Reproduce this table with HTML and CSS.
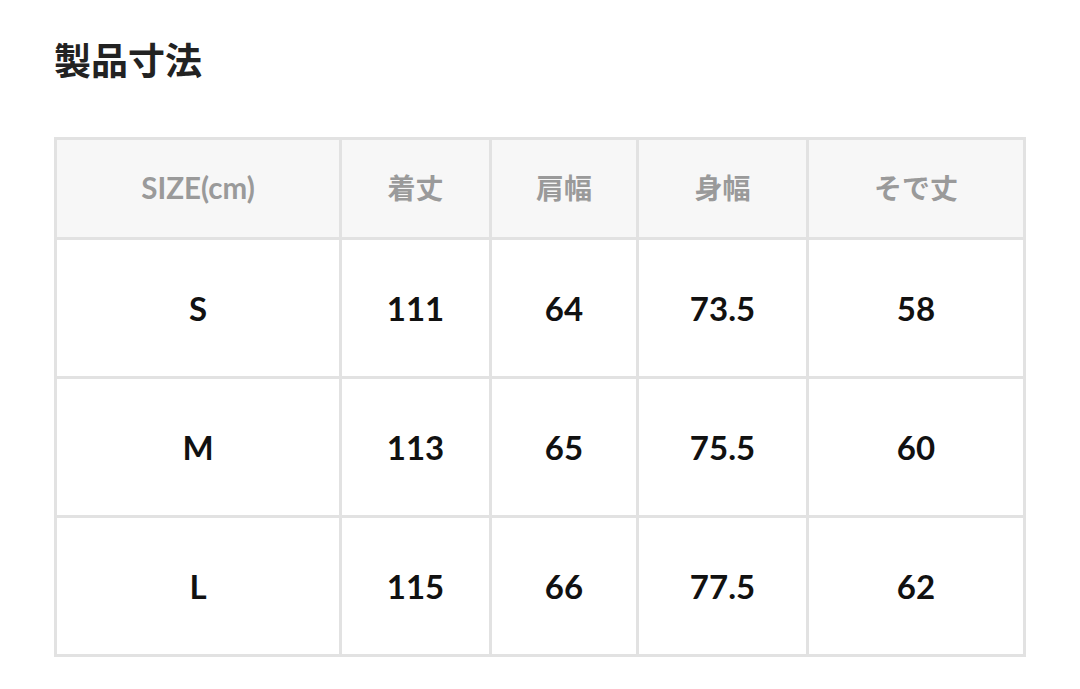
FILE: index.html
```html
<!DOCTYPE html>
<html lang="ja">
<head>
<meta charset="utf-8">
<link rel="stylesheet" href="styles.css">
</head>
<body>
<div class="page">
  <h2 class="title">製品寸法</h2>
  <table class="size-table">
    <colgroup>
      <col class="c1"><col class="c2"><col class="c3"><col class="c4"><col class="c5">
    </colgroup>
    <thead>
      <tr>
        <th class="latin">SIZE(cm)</th><th>着丈</th><th>肩幅</th><th>身幅</th><th>そで丈</th>
      </tr>
    </thead>
    <tbody>
      <tr><td>S</td><td>111</td><td>64</td><td>73.5</td><td>58</td></tr>
      <tr><td>M</td><td>113</td><td>65</td><td>75.5</td><td>60</td></tr>
      <tr><td>L</td><td>115</td><td>66</td><td>77.5</td><td>62</td></tr>
    </tbody>
  </table>
</div>
</body>
</html>
```

FILE: styles.css
```css
html, body {
  margin: 0;
  padding: 0;
  background: #ffffff;
}
body {
  font-family: Lato, "Noto Sans CJK JP", sans-serif;
  color: #111111;
}
.page {
  padding: 37px 0 0 54px;
}
.title {
  margin: 0;
  font-family: "Noto Sans CJK JP", sans-serif;
  font-size: 37px;
  line-height: 44px;
  font-weight: 700;
  color: #222222;
}
.size-table {
  margin-top: 56px;
  border-collapse: separate;
  border-spacing: 0;
  border-top: 3px solid #e2e2e2;
  border-left: 3px solid #e2e2e2;
  table-layout: fixed;
}
.c1 { width: 285px; }
.c2 { width: 150px; }
.c3 { width: 147px; }
.c4 { width: 170px; }
.c5 { width: 217px; }
.size-table th,
.size-table td {
  border-right: 3px solid #e2e2e2;
  border-bottom: 3px solid #e2e2e2;
  text-align: center;
  vertical-align: middle;
  padding: 0;
}
.size-table th {
  height: 94px;
  background: #f7f7f7;
  color: #9a9a9a;
  font-size: 28px;
  font-weight: 700;
  padding-bottom: 3px;
}
.size-table th.latin {
  font-size: 29.5px;
}
.size-table td {
  height: 136px;
  font-size: 33px;
  font-weight: 700;
  color: #111111;
}
```
